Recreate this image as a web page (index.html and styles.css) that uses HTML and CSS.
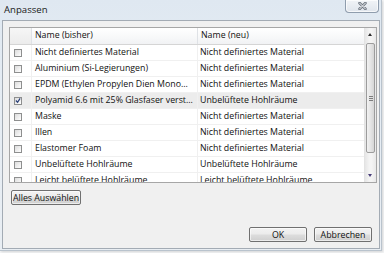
FILE: index.html
```html
<!DOCTYPE html>
<html>
<head>
<meta charset="utf-8">
<link rel="stylesheet" href="styles.css">
</head>
<body>
<div class="window">
  <div class="titlebar">
    <span class="title">Anpassen</span>
    <div class="close">
      <svg width="9" height="8" viewBox="0 0 9 8"><path d="M1.5 1 L7.5 7 M7.5 1 L1.5 7" stroke="#6f7781" stroke-width="2.6" stroke-linecap="round"/><path d="M1.5 1 L7.5 7 M7.5 1 L1.5 7" stroke="#f4f6f8" stroke-width="1" stroke-linecap="round"/></svg>
    </div>
  </div>
  <div class="client">
    <div class="list">
      <div class="grid">
        <div class="header">
          <div class="hcell chk"></div>
          <div class="hcell c1">Name (bisher)</div>
          <div class="hcell c2">Name (neu)</div>
        </div>
        <div class="rows">
          <div class="row"><div class="cell chk"><span class="box"></span></div><div class="cell c1">Nicht definiertes Material</div><div class="cell c2">Nicht definiertes Material</div></div>
          <div class="row"><div class="cell chk"><span class="box"></span></div><div class="cell c1">Aluminium (Si-Legierungen)</div><div class="cell c2">Nicht definiertes Material</div></div>
          <div class="row"><div class="cell chk"><span class="box"></span></div><div class="cell c1">EPDM (Ethylen Propylen Dien Mono...</div><div class="cell c2">Nicht definiertes Material</div></div>
          <div class="row sel"><div class="cell chk"><span class="box checked"><svg width="7" height="7" viewBox="0 0 7 7"><path d="M1 3.5 L3 5.5 L6 1" fill="none" stroke="#2a3f78" stroke-width="1.4"/></svg></span></div><div class="cell c1">Polyamid 6.6 mit 25% Glasfaser verst...</div><div class="cell c2">Unbelüftete Hohlräume</div></div>
          <div class="row"><div class="cell chk"><span class="box"></span></div><div class="cell c1">Maske</div><div class="cell c2">Nicht definiertes Material</div></div>
          <div class="row"><div class="cell chk"><span class="box"></span></div><div class="cell c1">Illen</div><div class="cell c2">Nicht definiertes Material</div></div>
          <div class="row"><div class="cell chk"><span class="box"></span></div><div class="cell c1">Elastomer Foam</div><div class="cell c2">Nicht definiertes Material</div></div>
          <div class="row"><div class="cell chk"><span class="box"></span></div><div class="cell c1">Unbelüftete Hohlräume</div><div class="cell c2">Unbelüftete Hohlräume</div></div>
          <div class="row"><div class="cell chk"><span class="box"></span></div><div class="cell c1">Leicht belüftete Hohlräume</div><div class="cell c2">Leicht belüftete Hohlräume</div></div>
        </div>
      </div>
      <div class="scrollbar">
        <div class="arrow up"></div>
        <div class="track">
          <div class="thumb"><span class="grip"></span></div>
        </div>
        <div class="arrow down"></div>
      </div>
    </div>
    <div class="leftbar">
      <button class="btn wide">Alles Auswählen</button>
    </div>
    <div class="footer">
      <button class="btn">OK</button>
      <button class="btn">Abbrechen</button>
    </div>
  </div>
</div>
</body>
</html>
```
FILE: styles.css
```css
* { box-sizing: border-box; }
html, body { margin: 0; padding: 0; }
body {
  width: 384px;
  height: 253px;
  background: #f4f5f6;
  font-family: "Open Sans", "Noto Sans", sans-serif;
  font-size: 8.8px;
  color: #111;
  overflow: hidden;
}
.window {
  width: 382px;
  height: 251px;
  display: flex;
  flex-direction: column;
  padding: 0 1px 1px 2px;
  background: linear-gradient(180deg, #dfe8f1 0%, #e6edf4 40%, #e9eef3 100%);
  border-right: 1px solid #b9c3cd;
  border-bottom: 1px solid #b9c3cd;
  box-shadow: 1px 1px 2px rgba(0,0,0,0.12);
}
.titlebar {
  height: 20px;
  display: flex;
  align-items: flex-start;
  justify-content: space-between;
  padding-left: 2px;
}
.title {
  margin-top: 3px;
  font-size: 9.6px;
  color: #1a1a1a;
}
.close {
  width: 34px;
  height: 13px;
  margin-right: 1px;
  border: 1px solid #8f9dad;
  border-top: none;
  border-radius: 0 0 4px 4px;
  background: linear-gradient(180deg, #f1f4f7, #dfe5ec);
  display: flex;
  align-items: center;
  justify-content: center;
  box-shadow: inset 0 0 0 1px rgba(255,255,255,0.7);
}
.client {
  flex: 1;
  background: #f0f0f0;
  border: 1px solid #a3abb4;
  display: flex;
  flex-direction: column;
  padding: 6px 2px 6px 6px;
}
.list {
  height: 156px;
  border: 1px solid #a6a6a6;
  background: #fff;
  display: flex;
  overflow: hidden;
}
.grid { flex: 1; display: flex; flex-direction: column; overflow: hidden; }
.header {
  height: 17px;
  flex: none;
  display: flex;
  background: linear-gradient(180deg, #ffffff 0%, #f7f8f9 60%, #f1f2f4 100%);
  border-bottom: 1px solid #d5d5d5;
}
.hcell {
  line-height: 15px;
  padding-left: 3px;
  border-right: 1px solid #dfe2e6;
  white-space: nowrap;
}
.header .chk { background: linear-gradient(180deg, #f6f6f6, #ececec); }
.chk { width: 22px; flex: none; }
.c1 { width: 166px; flex: none; }
.c2 { flex: 1; border-right: none; }
.rows { flex: 1; }
.row {
  height: 16px;
  display: flex;
  border-bottom: 1px solid #f0f0f0;
}
.row.sel { background: #ececec; }
.cell {
  line-height: 15px;
  padding-left: 3px;
  white-space: nowrap;
  overflow: hidden;
  border-right: 1px solid #f0f0f0;
}
.cell.c2 { padding-left: 2px; border-right: none; }
.cell.chk { padding-left: 4px; display: flex; align-items: center; }
.box {
  width: 8px;
  height: 8px;
  border: 1px solid #8e8f8f;
  background: linear-gradient(135deg, #dcdcdc, #f4f4f4 70%, #ffffff);
  display: flex;
  align-items: center;
  justify-content: center;
}
.box svg { display: block; }
.scrollbar {
  width: 12px;
  flex: none;
  display: flex;
  flex-direction: column;
  background: linear-gradient(90deg, #e6e6e6, #f4f4f4 40%, #f4f4f4 60%, #e8e8e8);
  border-left: 1px solid #e3e3e3;
}
.arrow {
  height: 14px;
  position: relative;
}
.arrow::after {
  content: "";
  position: absolute;
  left: 3px;
  width: 0;
  height: 0;
  border-left: 2.5px solid transparent;
  border-right: 2.5px solid transparent;
}
.arrow.up::after { top: 5px; border-bottom: 3px solid #2c2c2c; }
.arrow.down::after { top: 6px; border-top: 3px solid #4a3f7a; }
.track { flex: 1; padding: 1px 1px 0 1px; }
.thumb {
  height: 110px;
  border: 1px solid #9c9c9c;
  border-radius: 2px;
  background: linear-gradient(90deg, #f2f2f2, #e5e5e5 50%, #d6d6d6);
  display: flex;
  align-items: center;
  justify-content: center;
}
.grip {
  width: 4px;
  height: 5px;
  border-top: 1px solid #7d7d7d;
  border-bottom: 1px solid #7d7d7d;
  background: linear-gradient(180deg, transparent 1px, #7d7d7d 1px, #7d7d7d 2px, transparent 2px);
}
.leftbar { margin-top: 7px; padding-left: 2px; }
.btn {
  font-family: "Open Sans", "Noto Sans", sans-serif;
  font-size: 8.8px;
  color: #111;
  height: 15px;
  padding: 0;
  border: 1px solid #707070;
  border-radius: 2px;
  background: linear-gradient(180deg, #f3f3f3 0%, #ebebeb 48%, #dddddd 52%, #cfcfcf 100%);
  box-shadow: inset 0 0 0 1px rgba(255,255,255,0.6);
  line-height: 12px;
}
.btn.wide { width: 70px; }
.footer {
  margin-top: auto;
  display: flex;
  justify-content: flex-end;
  gap: 7px;
  padding-right: 5px;
}
.footer .btn { width: 58px; }
```
